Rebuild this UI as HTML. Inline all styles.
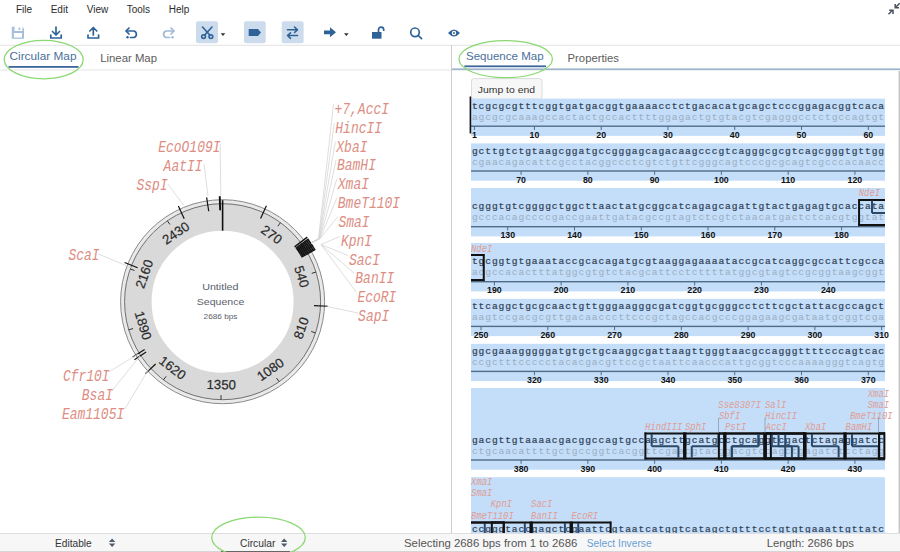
<!DOCTYPE html><html><head><meta charset="utf-8"><style>
html,body{margin:0;padding:0;width:900px;height:552px;overflow:hidden;background:#fff}
svg{display:block}
text{font-family:"Liberation Sans",sans-serif}
.mono{font-family:"Liberation Mono",monospace}
</style></head><body>
<svg width="900" height="552" viewBox="0 0 900 552">

<text x="16" y="12.7" font-size="10" fill="#2b2b2b">File</text>
<text x="50.7" y="12.7" font-size="10" fill="#2b2b2b">Edit</text>
<text x="86.7" y="12.7" font-size="10" fill="#2b2b2b">View</text>
<text x="126.7" y="12.7" font-size="10" fill="#2b2b2b">Tools</text>
<text x="168.7" y="12.7" font-size="10" fill="#2b2b2b">Help</text>
<g stroke="#465261" stroke-width="1.5" fill="none" stroke-linecap="butt"><path d="M888.5 14.3 L892.5 10.3"/><path d="M889.2 10.2 H893 V13.9"/><path d="M899.7 3.3 L895.7 7.3"/><path d="M895.2 4 V7.8 H899"/></g>
<rect x="196" y="21.3" width="22" height="22" rx="2" fill="#ccdcec"/>
<rect x="244" y="21.3" width="21.69999999999999" height="22" rx="2" fill="#ccdcec"/>
<rect x="281.7" y="21.3" width="21.900000000000034" height="22" rx="2" fill="#ccdcec"/>
<path fill-rule="evenodd" fill="#a6bfdb" d="M11.8 26.7 H22 L24 28.7 V38.7 H11.8 Z M14.5 26.7 V31 H22.3 V26.7 Z M13.9 32.9 V37.4 H22 V32.9 Z"/><rect x="18.6" y="27.5" width="1.6" height="2.6" fill="#a6bfdb"/>
<g fill="none" stroke="#2f6398" stroke-width="1.7" stroke-linecap="round" stroke-linejoin="round"><path d="M56 27 V34.5 M52.5 31.5 L56 35 L59.5 31.5"/><path d="M50.8 35 V38 H61.2 V35"/></g>
<g fill="none" stroke="#2f6398" stroke-width="1.7" stroke-linecap="round" stroke-linejoin="round"><path d="M93.3 35 V27.5 M89.8 31 L93.3 27.5 L96.8 31"/><path d="M88 35 V38 H98.6 V35"/></g>
<g fill="none" stroke="#2f6398" stroke-width="1.7" stroke-linecap="round" stroke-linejoin="round"><path d="M129 28 L126 31 L129 34"/><path d="M126.5 31 H134 A3.4 3.4 0 0 1 134 37.5 H130.5"/></g><circle cx="127.5" cy="37.3" r="1.2" fill="#2f6398"/>
<g fill="none" stroke="#9db9d6" stroke-width="1.7" stroke-linecap="round" stroke-linejoin="round"><path d="M171 28 L174 31 L171 34"/><path d="M173.5 31 H166 A3.4 3.4 0 0 0 166 37.5 H169.5"/></g><circle cx="172.5" cy="37.3" r="1.2" fill="#9db9d6"/>
<g fill="none" stroke="#2f6398" stroke-width="1.6" stroke-linecap="round"><path d="M202.5 27 L210 35.3 M212 27 L204.5 35.3"/><circle cx="203.6" cy="36.6" r="1.9"/><circle cx="210.9" cy="36.6" r="1.9"/></g>
<path d="M220.7 33.3 H225.3 L223 36 Z" fill="#333"/>
<path d="M248.7 29 H258 L261 32.5 L258 36 H248.7 Z" fill="#2f6398"/>
<g fill="none" stroke="#2f6398" stroke-width="1.6" stroke-linecap="round" stroke-linejoin="round"><path d="M287.5 29.8 H297.5 M294.5 27 L297.5 29.8 L294.5 32.5"/><path d="M297.5 35.5 H287.5 M290.5 32.8 L287.5 35.5 L290.5 38.3"/></g>
<path d="M324 30.5 H330 V27.3 L336 32.3 L330 37.3 V34.2 H324 Z" fill="#2f6398"/>
<path d="M344 33.3 H348.7 L346.3 36 Z" fill="#333"/>
<rect x="372" y="32" width="9.5" height="6.7" fill="#2f6398"/><path d="M378.5 32.5 V29.8 A2.6 2.6 0 0 1 383.7 29.8 V31" fill="none" stroke="#2f6398" stroke-width="1.7"/>
<g fill="none" stroke="#2f6398" stroke-width="1.7" stroke-linecap="round"><circle cx="415" cy="32.3" r="4.3"/><path d="M418.3 35.6 L421.6 38.6"/></g>
<path d="M448 33 Q454 26 460 33 Q454 40 448 33 Z" fill="#2f6398"/><circle cx="454" cy="33" r="2.2" fill="#fff"/><circle cx="454" cy="33" r="1" fill="#2f6398"/>
<rect x="0" y="44.8" width="900" height="1" fill="#e3e3e3"/>
<text x="9.5" y="60.4" font-size="11.5" fill="#4a6f9c" textLength="67" lengthAdjust="spacingAndGlyphs">Circular Map</text>
<rect x="8.5" y="66" width="70" height="1.8" fill="#3d679c"/>
<text x="100.2" y="61.5" font-size="11.5" fill="#5c5c5c" textLength="56.8" lengthAdjust="spacingAndGlyphs">Linear Map</text>
<rect x="0" y="69.5" width="451" height="1" fill="#e6e6e6"/>
<rect x="451" y="45" width="1" height="488" fill="#cdcdcd"/>
<text x="466" y="60.1" font-size="11.5" fill="#4a6f9c" textLength="77.6" lengthAdjust="spacingAndGlyphs">Sequence Map</text>
<rect x="464.4" y="65.4" width="81.6" height="1.8" fill="#3d679c"/>
<text x="567.6" y="61.6" font-size="11.5" fill="#5c5c5c" textLength="51.4" lengthAdjust="spacingAndGlyphs">Properties</text>
<rect x="452" y="68.4" width="448" height="1.8" fill="#9db5cc"/>
<rect x="898.6" y="71" width="1.4" height="462" fill="#c4c4c4"/>
<rect x="471.5" y="78.6" width="70.5" height="20.6" rx="2.5" fill="#f7f7f7" stroke="#dcdcdc" stroke-width="1"/>
<text x="477.8" y="92.6" font-size="9.5" fill="#333" textLength="57.2" lengthAdjust="spacingAndGlyphs">Jump to end</text>
<rect x="471.0" y="98.6" width="413.97" height="37.3" fill="#c4defa"/>
<text class="mono" x="471.9" y="108.8" font-size="9.6" font-weight="normal" fill="#314357" stroke="#314357" stroke-width="0.22" textLength="412.2" lengthAdjust="spacing" transform="translate(0 108.8) scale(1 1.02) translate(0 -108.8)">tcgcgcgtttcggtgatgacggtgaaaacctctgacacatgcagctcccggagacggtcaca</text>
<text class="mono" x="471.9" y="119.9" font-size="9.6" fill="#9aadc1" textLength="412.2" lengthAdjust="spacing" transform="translate(0 119.9) scale(1 1.02) translate(0 -119.9)">agcgcgcaaagccactactgccacttttggagactgtgtacgtcgagggcctctgccagtgt</text>
<rect x="471.0" y="125.5" width="413.97" height="1.4" fill="#4f6c88"/>
<rect x="473.84" y="126.2" width="1" height="3.8" fill="#4f6c88"/>
<text x="474.34" y="137.8" font-size="8.8" font-weight="bold" fill="#111" text-anchor="middle">1</text>
<rect x="533.93" y="126.2" width="1" height="3.8" fill="#4f6c88"/>
<text x="534.43" y="137.8" font-size="8.8" font-weight="bold" fill="#111" text-anchor="middle">10</text>
<rect x="600.70" y="126.2" width="1" height="3.8" fill="#4f6c88"/>
<text x="601.20" y="137.8" font-size="8.8" font-weight="bold" fill="#111" text-anchor="middle">20</text>
<rect x="667.47" y="126.2" width="1" height="3.8" fill="#4f6c88"/>
<text x="667.97" y="137.8" font-size="8.8" font-weight="bold" fill="#111" text-anchor="middle">30</text>
<rect x="734.24" y="126.2" width="1" height="3.8" fill="#4f6c88"/>
<text x="734.74" y="137.8" font-size="8.8" font-weight="bold" fill="#111" text-anchor="middle">40</text>
<rect x="801.01" y="126.2" width="1" height="3.8" fill="#4f6c88"/>
<text x="801.51" y="137.8" font-size="8.8" font-weight="bold" fill="#111" text-anchor="middle">50</text>
<rect x="867.78" y="126.2" width="1" height="3.8" fill="#4f6c88"/>
<text x="868.28" y="137.8" font-size="8.8" font-weight="bold" fill="#111" text-anchor="middle">60</text>
<rect x="471.0" y="143.4" width="413.97" height="37.3" fill="#c4defa"/>
<text class="mono" x="471.9" y="153.6" font-size="9.6" font-weight="normal" fill="#314357" stroke="#314357" stroke-width="0.22" textLength="412.2" lengthAdjust="spacing" transform="translate(0 153.6) scale(1 1.02) translate(0 -153.6)">gcttgtctgtaagcggatgccgggagcagacaagcccgtcagggcgcgtcagcgggtgttgg</text>
<text class="mono" x="471.9" y="164.7" font-size="9.6" fill="#9aadc1" textLength="412.2" lengthAdjust="spacing" transform="translate(0 164.7) scale(1 1.02) translate(0 -164.7)">cgaacagacattcgcctacggccctcgtctgttcgggcagtcccgcgcagtcgcccacaacc</text>
<rect x="471.0" y="170.3" width="413.97" height="1.4" fill="#4f6c88"/>
<rect x="520.58" y="171.0" width="1" height="3.8" fill="#4f6c88"/>
<text x="521.08" y="182.6" font-size="8.8" font-weight="bold" fill="#111" text-anchor="middle">70</text>
<rect x="587.35" y="171.0" width="1" height="3.8" fill="#4f6c88"/>
<text x="587.85" y="182.6" font-size="8.8" font-weight="bold" fill="#111" text-anchor="middle">80</text>
<rect x="654.12" y="171.0" width="1" height="3.8" fill="#4f6c88"/>
<text x="654.62" y="182.6" font-size="8.8" font-weight="bold" fill="#111" text-anchor="middle">90</text>
<rect x="720.89" y="171.0" width="1" height="3.8" fill="#4f6c88"/>
<text x="721.39" y="182.6" font-size="8.8" font-weight="bold" fill="#111" text-anchor="middle">100</text>
<rect x="787.66" y="171.0" width="1" height="3.8" fill="#4f6c88"/>
<text x="788.16" y="182.6" font-size="8.8" font-weight="bold" fill="#111" text-anchor="middle">110</text>
<rect x="854.43" y="171.0" width="1" height="3.8" fill="#4f6c88"/>
<text x="854.93" y="182.6" font-size="8.8" font-weight="bold" fill="#111" text-anchor="middle">120</text>
<rect x="471.0" y="188" width="413.97" height="48.4" fill="#c4defa"/>
<text class="mono" x="471.9" y="209.3" font-size="9.6" font-weight="normal" fill="#314357" stroke="#314357" stroke-width="0.22" textLength="412.2" lengthAdjust="spacing" transform="translate(0 209.3) scale(1 1.02) translate(0 -209.3)">cgggtgtcggggctggcttaactatgcggcatcagagcagattgtactgagagtgcaccata</text>
<text class="mono" x="471.9" y="220.4" font-size="9.6" fill="#9aadc1" textLength="412.2" lengthAdjust="spacing" transform="translate(0 220.4) scale(1 1.02) translate(0 -220.4)">gcccacagccccgaccgaattgatacgccgtagtctcgtctaacatgactctcacgtggtat</text>
<rect x="471.0" y="226.0" width="413.97" height="1.4" fill="#4f6c88"/>
<rect x="507.22" y="226.7" width="1" height="3.8" fill="#4f6c88"/>
<text x="507.72" y="238.3" font-size="8.8" font-weight="bold" fill="#111" text-anchor="middle">130</text>
<rect x="573.99" y="226.7" width="1" height="3.8" fill="#4f6c88"/>
<text x="574.49" y="238.3" font-size="8.8" font-weight="bold" fill="#111" text-anchor="middle">140</text>
<rect x="640.76" y="226.7" width="1" height="3.8" fill="#4f6c88"/>
<text x="641.26" y="238.3" font-size="8.8" font-weight="bold" fill="#111" text-anchor="middle">150</text>
<rect x="707.53" y="226.7" width="1" height="3.8" fill="#4f6c88"/>
<text x="708.03" y="238.3" font-size="8.8" font-weight="bold" fill="#111" text-anchor="middle">160</text>
<rect x="774.30" y="226.7" width="1" height="3.8" fill="#4f6c88"/>
<text x="774.80" y="238.3" font-size="8.8" font-weight="bold" fill="#111" text-anchor="middle">170</text>
<rect x="841.07" y="226.7" width="1" height="3.8" fill="#4f6c88"/>
<text x="841.57" y="238.3" font-size="8.8" font-weight="bold" fill="#111" text-anchor="middle">180</text>
<rect x="471.0" y="243" width="413.97" height="48.4" fill="#c4defa"/>
<text class="mono" x="471.9" y="264.3" font-size="9.6" font-weight="normal" fill="#314357" stroke="#314357" stroke-width="0.22" textLength="412.2" lengthAdjust="spacing" transform="translate(0 264.3) scale(1 1.02) translate(0 -264.3)">tgcggtgtgaaataccgcacagatgcgtaaggagaaaataccgcatcaggcgccattcgcca</text>
<text class="mono" x="471.9" y="275.4" font-size="9.6" fill="#9aadc1" textLength="412.2" lengthAdjust="spacing" transform="translate(0 275.4) scale(1 1.02) translate(0 -275.4)">acgccacactttatggcgtgtctacgcattcctcttttatggcgtagtccgcggtaagcggt</text>
<rect x="471.0" y="281.0" width="413.97" height="1.4" fill="#4f6c88"/>
<rect x="493.87" y="281.7" width="1" height="3.8" fill="#4f6c88"/>
<text x="494.37" y="293.3" font-size="8.8" font-weight="bold" fill="#111" text-anchor="middle">190</text>
<rect x="560.64" y="281.7" width="1" height="3.8" fill="#4f6c88"/>
<text x="561.14" y="293.3" font-size="8.8" font-weight="bold" fill="#111" text-anchor="middle">200</text>
<rect x="627.41" y="281.7" width="1" height="3.8" fill="#4f6c88"/>
<text x="627.91" y="293.3" font-size="8.8" font-weight="bold" fill="#111" text-anchor="middle">210</text>
<rect x="694.18" y="281.7" width="1" height="3.8" fill="#4f6c88"/>
<text x="694.68" y="293.3" font-size="8.8" font-weight="bold" fill="#111" text-anchor="middle">220</text>
<rect x="760.95" y="281.7" width="1" height="3.8" fill="#4f6c88"/>
<text x="761.45" y="293.3" font-size="8.8" font-weight="bold" fill="#111" text-anchor="middle">230</text>
<rect x="827.72" y="281.7" width="1" height="3.8" fill="#4f6c88"/>
<text x="828.22" y="293.3" font-size="8.8" font-weight="bold" fill="#111" text-anchor="middle">240</text>
<rect x="471.0" y="298.8" width="413.97" height="37.3" fill="#c4defa"/>
<text class="mono" x="471.9" y="309.0" font-size="9.6" font-weight="normal" fill="#314357" stroke="#314357" stroke-width="0.22" textLength="412.2" lengthAdjust="spacing" transform="translate(0 309.0) scale(1 1.02) translate(0 -309.0)">ttcaggctgcgcaactgttgggaagggcgatcggtgcgggcctcttcgctattacgccagct</text>
<text class="mono" x="471.9" y="320.1" font-size="9.6" fill="#9aadc1" textLength="412.2" lengthAdjust="spacing" transform="translate(0 320.1) scale(1 1.02) translate(0 -320.1)">aagtccgacgcgttgacaacccttcccgctagccacgcccggagaagcgataatgcggtcga</text>
<rect x="471.0" y="325.7" width="413.97" height="1.4" fill="#4f6c88"/>
<rect x="480.52" y="326.4" width="1" height="3.8" fill="#4f6c88"/>
<text x="481.02" y="338.0" font-size="8.8" font-weight="bold" fill="#111" text-anchor="middle">250</text>
<rect x="547.29" y="326.4" width="1" height="3.8" fill="#4f6c88"/>
<text x="547.79" y="338.0" font-size="8.8" font-weight="bold" fill="#111" text-anchor="middle">260</text>
<rect x="614.06" y="326.4" width="1" height="3.8" fill="#4f6c88"/>
<text x="614.56" y="338.0" font-size="8.8" font-weight="bold" fill="#111" text-anchor="middle">270</text>
<rect x="680.83" y="326.4" width="1" height="3.8" fill="#4f6c88"/>
<text x="681.33" y="338.0" font-size="8.8" font-weight="bold" fill="#111" text-anchor="middle">280</text>
<rect x="747.60" y="326.4" width="1" height="3.8" fill="#4f6c88"/>
<text x="748.10" y="338.0" font-size="8.8" font-weight="bold" fill="#111" text-anchor="middle">290</text>
<rect x="814.37" y="326.4" width="1" height="3.8" fill="#4f6c88"/>
<text x="814.87" y="338.0" font-size="8.8" font-weight="bold" fill="#111" text-anchor="middle">300</text>
<rect x="881.14" y="326.4" width="1" height="3.8" fill="#4f6c88"/>
<text x="881.64" y="338.0" font-size="8.8" font-weight="bold" fill="#111" text-anchor="middle">310</text>
<rect x="471.0" y="343.8" width="413.97" height="37.3" fill="#c4defa"/>
<text class="mono" x="471.9" y="354.0" font-size="9.6" font-weight="normal" fill="#314357" stroke="#314357" stroke-width="0.22" textLength="412.2" lengthAdjust="spacing" transform="translate(0 354.0) scale(1 1.02) translate(0 -354.0)">ggcgaaagggggatgtgctgcaaggcgattaagttgggtaacgccagggttttcccagtcac</text>
<text class="mono" x="471.9" y="365.1" font-size="9.6" fill="#9aadc1" textLength="412.2" lengthAdjust="spacing" transform="translate(0 365.1) scale(1 1.02) translate(0 -365.1)">ccgctttccccctacacgacgttccgctaattcaacccattgcggtcccaaaagggtcagtg</text>
<rect x="471.0" y="370.7" width="413.97" height="1.4" fill="#4f6c88"/>
<rect x="533.93" y="371.4" width="1" height="3.8" fill="#4f6c88"/>
<text x="534.43" y="383.0" font-size="8.8" font-weight="bold" fill="#111" text-anchor="middle">320</text>
<rect x="600.70" y="371.4" width="1" height="3.8" fill="#4f6c88"/>
<text x="601.20" y="383.0" font-size="8.8" font-weight="bold" fill="#111" text-anchor="middle">330</text>
<rect x="667.47" y="371.4" width="1" height="3.8" fill="#4f6c88"/>
<text x="667.97" y="383.0" font-size="8.8" font-weight="bold" fill="#111" text-anchor="middle">340</text>
<rect x="734.24" y="371.4" width="1" height="3.8" fill="#4f6c88"/>
<text x="734.74" y="383.0" font-size="8.8" font-weight="bold" fill="#111" text-anchor="middle">350</text>
<rect x="801.01" y="371.4" width="1" height="3.8" fill="#4f6c88"/>
<text x="801.51" y="383.0" font-size="8.8" font-weight="bold" fill="#111" text-anchor="middle">360</text>
<rect x="867.78" y="371.4" width="1" height="3.8" fill="#4f6c88"/>
<text x="868.28" y="383.0" font-size="8.8" font-weight="bold" fill="#111" text-anchor="middle">370</text>
<rect x="471.0" y="388" width="413.97" height="81.7" fill="#c4defa"/>
<text class="mono" x="471.9" y="442.6" font-size="9.6" font-weight="normal" fill="#314357" stroke="#314357" stroke-width="0.22" textLength="412.2" lengthAdjust="spacing" transform="translate(0 442.6) scale(1 1.02) translate(0 -442.6)">gacgttgtaaaacgacggccagtgccaagcttgcatgcctgcaggtcgactctagaggatcc</text>
<text class="mono" x="471.9" y="453.7" font-size="9.6" fill="#9aadc1" textLength="412.2" lengthAdjust="spacing" transform="translate(0 453.7) scale(1 1.02) translate(0 -453.7)">ctgcaacattttgctgccggtcacggttcgaacgtacggacgtccagctgagatctcctagg</text>
<rect x="471.0" y="459.3" width="413.97" height="1.4" fill="#4f6c88"/>
<rect x="520.58" y="460.0" width="1" height="3.8" fill="#4f6c88"/>
<text x="521.08" y="471.6" font-size="8.8" font-weight="bold" fill="#111" text-anchor="middle">380</text>
<rect x="587.35" y="460.0" width="1" height="3.8" fill="#4f6c88"/>
<text x="587.85" y="471.6" font-size="8.8" font-weight="bold" fill="#111" text-anchor="middle">390</text>
<rect x="654.12" y="460.0" width="1" height="3.8" fill="#4f6c88"/>
<text x="654.62" y="471.6" font-size="8.8" font-weight="bold" fill="#111" text-anchor="middle">400</text>
<rect x="720.89" y="460.0" width="1" height="3.8" fill="#4f6c88"/>
<text x="721.39" y="471.6" font-size="8.8" font-weight="bold" fill="#111" text-anchor="middle">410</text>
<rect x="787.66" y="460.0" width="1" height="3.8" fill="#4f6c88"/>
<text x="788.16" y="471.6" font-size="8.8" font-weight="bold" fill="#111" text-anchor="middle">420</text>
<rect x="854.43" y="460.0" width="1" height="3.8" fill="#4f6c88"/>
<text x="854.93" y="471.6" font-size="8.8" font-weight="bold" fill="#111" text-anchor="middle">430</text>
<rect x="471.0" y="477.2" width="413.97" height="81.7" fill="#c4defa"/>
<text class="mono" x="471.9" y="531.8" font-size="9.6" font-weight="normal" fill="#314357" stroke="#314357" stroke-width="0.22" textLength="412.2" lengthAdjust="spacing" transform="translate(0 531.8) scale(1 1.02) translate(0 -531.8)">ccgggtaccgagctcgaattcgtaatcatggtcatagctgtttcctgtgtgaaattgttatc</text>
<text class="mono" x="471.9" y="542.9" font-size="9.6" fill="#9aadc1" textLength="412.2" lengthAdjust="spacing" transform="translate(0 542.9) scale(1 1.02) translate(0 -542.9)">ggcccatggctcgagcttaagcattagtaccagtatcgacaaaggacacactttaacaatag</text>
<rect x="471.0" y="548.5" width="413.97" height="1.4" fill="#4f6c88"/>
<rect x="507.22" y="549.2" width="1" height="3.8" fill="#4f6c88"/>
<text x="507.72" y="560.8" font-size="8.8" font-weight="bold" fill="#111" text-anchor="middle">440</text>
<rect x="573.99" y="549.2" width="1" height="3.8" fill="#4f6c88"/>
<text x="574.49" y="560.8" font-size="8.8" font-weight="bold" fill="#111" text-anchor="middle">450</text>
<rect x="640.76" y="549.2" width="1" height="3.8" fill="#4f6c88"/>
<text x="641.26" y="560.8" font-size="8.8" font-weight="bold" fill="#111" text-anchor="middle">460</text>
<rect x="707.53" y="549.2" width="1" height="3.8" fill="#4f6c88"/>
<text x="708.03" y="560.8" font-size="8.8" font-weight="bold" fill="#111" text-anchor="middle">470</text>
<rect x="774.30" y="549.2" width="1" height="3.8" fill="#4f6c88"/>
<text x="774.80" y="560.8" font-size="8.8" font-weight="bold" fill="#111" text-anchor="middle">480</text>
<rect x="841.07" y="549.2" width="1" height="3.8" fill="#4f6c88"/>
<text x="841.57" y="560.8" font-size="8.8" font-weight="bold" fill="#111" text-anchor="middle">490</text>
<path d="M858.27 200.1 H884.97 M858.27 225.1 H884.97" stroke="#111" stroke-width="2" fill="none"/>
<rect x="858.07" y="199.1" width="2" height="27" fill="#111"/>
<path d="M872.02 200.6 V212.9 M872.02 212.9 H884.97 " stroke="#2b4867" stroke-width="2" fill="none"/>
<path d="M471.00 255.1 H484.35 M471.00 280.1 H484.35" stroke="#111" stroke-width="2" fill="none"/>
<rect x="482.75" y="254.1" width="2" height="27" fill="#111"/>
<text class="mono" x="858.8" y="196.1" font-size="8.9" font-style="italic" fill="#e09d94" transform="translate(0 195.6) scale(1 1.18) translate(0 -195.6)">NdeI</text>
<text class="mono" x="471" y="251.5" font-size="8.9" font-style="italic" fill="#e09d94" transform="translate(0 251) scale(1 1.18) translate(0 -251)">NdeI</text>
<path d="M644.60 433.4 H684.66 M644.60 458.4 H684.66" stroke="#111" stroke-width="2" fill="none"/>
<rect x="644.40" y="432.4" width="2" height="27" fill="#111"/>
<rect x="683.06" y="432.4" width="2" height="27" fill="#111"/>
<path d="M651.68 433.9 V446.2 M651.68 446.2 H678.39 M678.39 446.2 V457.4 " stroke="#2b4867" stroke-width="2" fill="none"/>
<path d="M684.66 433.4 H724.73 M684.66 458.4 H724.73" stroke="#111" stroke-width="2" fill="none"/>
<rect x="684.46" y="432.4" width="2" height="27" fill="#111"/>
<rect x="723.13" y="432.4" width="2" height="27" fill="#111"/>
<path d="M718.45 433.9 V446.2 M691.74 446.2 H718.45 M691.74 446.2 V457.4 " stroke="#2b4867" stroke-width="2" fill="none"/>
<path d="M718.05 433.4 H771.46 M718.05 458.4 H771.46" stroke="#111" stroke-width="2" fill="none"/>
<rect x="717.85" y="432.4" width="2" height="27" fill="#111"/>
<rect x="769.86" y="432.4" width="2" height="27" fill="#111"/>
<path d="M758.51 433.9 V446.2 M731.80 446.2 H758.51 M731.80 446.2 V457.4 " stroke="#2b4867" stroke-width="2" fill="none"/>
<path d="M724.73 433.4 H764.79 M724.73 458.4 H764.79" stroke="#111" stroke-width="2" fill="none"/>
<rect x="724.53" y="432.4" width="2" height="27" fill="#111"/>
<rect x="763.19" y="432.4" width="2" height="27" fill="#111"/>
<path d="M758.51 433.9 V446.2 M731.80 446.2 H758.51 M731.80 446.2 V457.4 " stroke="#2b4867" stroke-width="2" fill="none"/>
<path d="M764.79 433.4 H804.85 M764.79 458.4 H804.85" stroke="#111" stroke-width="2" fill="none"/>
<rect x="764.59" y="432.4" width="2" height="27" fill="#111"/>
<rect x="803.25" y="432.4" width="2" height="27" fill="#111"/>
<path d="M771.87 433.9 V446.2 M771.87 446.2 H798.57 M798.57 446.2 V457.4 " stroke="#2b4867" stroke-width="2" fill="none"/>
<path d="M764.79 433.4 H804.85 M764.79 458.4 H804.85" stroke="#111" stroke-width="2" fill="none"/>
<rect x="764.59" y="432.4" width="2" height="27" fill="#111"/>
<rect x="803.25" y="432.4" width="2" height="27" fill="#111"/>
<path d="M785.22 433.9 V446.2 M785.22 446.2 V457.4 " stroke="#2b4867" stroke-width="2" fill="none"/>
<path d="M764.79 433.4 H804.85 M764.79 458.4 H804.85" stroke="#111" stroke-width="2" fill="none"/>
<rect x="764.59" y="432.4" width="2" height="27" fill="#111"/>
<rect x="803.25" y="432.4" width="2" height="27" fill="#111"/>
<path d="M778.54 433.9 V446.2 M778.54 446.2 H791.90 M791.90 446.2 V457.4 " stroke="#2b4867" stroke-width="2" fill="none"/>
<path d="M804.85 433.4 H844.91 M804.85 458.4 H844.91" stroke="#111" stroke-width="2" fill="none"/>
<rect x="804.65" y="432.4" width="2" height="27" fill="#111"/>
<rect x="843.31" y="432.4" width="2" height="27" fill="#111"/>
<path d="M811.93 433.9 V446.2 M811.93 446.2 H838.63 M838.63 446.2 V457.4 " stroke="#2b4867" stroke-width="2" fill="none"/>
<path d="M844.91 433.4 H884.97 M844.91 458.4 H884.97" stroke="#111" stroke-width="2" fill="none"/>
<rect x="844.71" y="432.4" width="2" height="27" fill="#111"/>
<rect x="883.37" y="432.4" width="2" height="27" fill="#111"/>
<path d="M851.99 433.9 V446.2 M851.99 446.2 H878.70 M878.70 446.2 V457.4 " stroke="#2b4867" stroke-width="2" fill="none"/>
<path d="M878.30 433.4 H884.97 M878.30 458.4 H884.97" stroke="#111" stroke-width="2" fill="none"/>
<rect x="878.10" y="432.4" width="2" height="27" fill="#111"/>
<path d="M471.00 522.6 H504.38 M471.00 547.6 H504.38" stroke="#111" stroke-width="2" fill="none"/>
<rect x="502.78" y="521.6" width="2" height="27" fill="#111"/>
<path d="M484.75 523.1 V535.4 M484.75 535.4 V546.6 " stroke="#2b4867" stroke-width="2" fill="none"/>
<path d="M878.30 433.4 H884.97 M878.30 458.4 H884.97" stroke="#111" stroke-width="2" fill="none"/>
<rect x="878.10" y="432.4" width="2" height="27" fill="#111"/>
<path d="M471.00 522.6 H504.38 M471.00 547.6 H504.38" stroke="#111" stroke-width="2" fill="none"/>
<rect x="502.78" y="521.6" width="2" height="27" fill="#111"/>
<path d="M471.40 535.4 H498.11 M498.11 535.4 V546.6 " stroke="#2b4867" stroke-width="2" fill="none"/>
<path d="M491.03 522.6 H531.09 M491.03 547.6 H531.09" stroke="#111" stroke-width="2" fill="none"/>
<rect x="490.83" y="521.6" width="2" height="27" fill="#111"/>
<rect x="529.49" y="521.6" width="2" height="27" fill="#111"/>
<path d="M524.82 523.1 V535.4 M498.11 535.4 H524.82 M498.11 535.4 V546.6 " stroke="#2b4867" stroke-width="2" fill="none"/>
<path d="M531.09 522.6 H571.15 M531.09 547.6 H571.15" stroke="#111" stroke-width="2" fill="none"/>
<rect x="530.89" y="521.6" width="2" height="27" fill="#111"/>
<rect x="569.55" y="521.6" width="2" height="27" fill="#111"/>
<path d="M564.88 523.1 V535.4 M538.17 535.4 H564.88 M538.17 535.4 V546.6 " stroke="#2b4867" stroke-width="2" fill="none"/>
<path d="M571.15 522.6 H611.22 M571.15 547.6 H611.22" stroke="#111" stroke-width="2" fill="none"/>
<rect x="570.95" y="521.6" width="2" height="27" fill="#111"/>
<rect x="609.62" y="521.6" width="2" height="27" fill="#111"/>
<path d="M578.23 523.1 V535.4 M578.23 535.4 H604.94 M604.94 535.4 V546.6 " stroke="#2b4867" stroke-width="2" fill="none"/>
<text class="mono" x="718.3" y="408.1" font-size="8.9" font-style="italic" fill="#e09d94" transform="translate(0 407.6) scale(1 1.18) translate(0 -407.6)">Sse8387I</text>
<text class="mono" x="765" y="408.1" font-size="8.9" font-style="italic" fill="#e09d94" transform="translate(0 407.6) scale(1 1.18) translate(0 -407.6)">SalI</text>
<text class="mono" x="718.9" y="418.8" font-size="8.9" font-style="italic" fill="#e09d94" transform="translate(0 418.3) scale(1 1.18) translate(0 -418.3)">SbfI</text>
<text class="mono" x="765" y="418.8" font-size="8.9" font-style="italic" fill="#e09d94" transform="translate(0 418.3) scale(1 1.18) translate(0 -418.3)">HincII</text>
<text class="mono" x="645" y="429.9" font-size="8.9" font-style="italic" fill="#e09d94" transform="translate(0 429.4) scale(1 1.18) translate(0 -429.4)">HindIII</text>
<text class="mono" x="685" y="429.9" font-size="8.9" font-style="italic" fill="#e09d94" transform="translate(0 429.4) scale(1 1.18) translate(0 -429.4)">SphI</text>
<text class="mono" x="725" y="429.9" font-size="8.9" font-style="italic" fill="#e09d94" transform="translate(0 429.4) scale(1 1.18) translate(0 -429.4)">PstI</text>
<text class="mono" x="765.6" y="429.9" font-size="8.9" font-style="italic" fill="#e09d94" transform="translate(0 429.4) scale(1 1.18) translate(0 -429.4)">AccI</text>
<text class="mono" x="805" y="429.9" font-size="8.9" font-style="italic" fill="#e09d94" transform="translate(0 429.4) scale(1 1.18) translate(0 -429.4)">XbaI</text>
<text class="mono" x="845.6" y="429.9" font-size="8.9" font-style="italic" fill="#e09d94" transform="translate(0 429.4) scale(1 1.18) translate(0 -429.4)">BamHI</text>
<text class="mono" x="867.8" y="396.6" font-size="8.9" font-style="italic" fill="#e09d94" transform="translate(0 396.1) scale(1 1.18) translate(0 -396.1)">XmaI</text>
<text class="mono" x="867.8" y="407.7" font-size="8.9" font-style="italic" fill="#e09d94" transform="translate(0 407.2) scale(1 1.18) translate(0 -407.2)">SmaI</text>
<text class="mono" x="850" y="418.8" font-size="8.9" font-style="italic" fill="#e09d94" transform="translate(0 418.3) scale(1 1.18) translate(0 -418.3)">BmeT110I</text>
<text class="mono" x="471.1" y="485.2" font-size="8.9" font-style="italic" fill="#e09d94" transform="translate(0 484.7) scale(1 1.18) translate(0 -484.7)">XmaI</text>
<text class="mono" x="471.1" y="496.2" font-size="8.9" font-style="italic" fill="#e09d94" transform="translate(0 495.7) scale(1 1.18) translate(0 -495.7)">SmaI</text>
<text class="mono" x="490.8" y="507.2" font-size="8.9" font-style="italic" fill="#e09d94" transform="translate(0 506.7) scale(1 1.18) translate(0 -506.7)">KpnI</text>
<text class="mono" x="531.1" y="507.2" font-size="8.9" font-style="italic" fill="#e09d94" transform="translate(0 506.7) scale(1 1.18) translate(0 -506.7)">SacI</text>
<text class="mono" x="471.1" y="518.5" font-size="8.9" font-style="italic" fill="#e09d94" transform="translate(0 518) scale(1 1.18) translate(0 -518)">BmeT110I</text>
<text class="mono" x="531.1" y="518.5" font-size="8.9" font-style="italic" fill="#e09d94" transform="translate(0 518) scale(1 1.18) translate(0 -518)">BanII</text>
<text class="mono" x="571.5" y="518.5" font-size="8.9" font-style="italic" fill="#e09d94" transform="translate(0 518) scale(1 1.18) translate(0 -518)">EcoRI</text>
<rect x="718.0" y="418" width="0.8" height="14.800000000000011" fill="#8a9bb0"/>
<rect x="764.6" y="418" width="0.8" height="14.800000000000011" fill="#8a9bb0"/>
<rect x="878.0" y="417" width="0.8" height="15.800000000000011" fill="#8a9bb0"/>
<rect x="469.6" y="96.5" width="1.6" height="37" fill="#111"/>
<rect x="0" y="533" width="900" height="19" fill="#f7f7f7"/>
<rect x="0" y="533" width="900" height="1" fill="#dedede"/>
<rect x="0" y="551" width="900" height="1" fill="#d6d6d6"/>
<rect x="221" y="551" width="69" height="1" fill="#666"/>
<text x="55" y="546.9" font-size="10" fill="#333" textLength="36.7" lengthAdjust="spacingAndGlyphs">Editable</text>
<path d="M108.9 542 L112.10000000000001 538.5 L115.30000000000001 542 Z M108.9 543.5 L112.10000000000001 547 L115.30000000000001 543.5 Z" fill="#4d5c6c"/>
<text x="240" y="546.9" font-size="10" fill="#333" textLength="35.3" lengthAdjust="spacingAndGlyphs">Circular</text>
<path d="M281 542 L284.2 538.5 L287.4 542 Z M281 543.5 L284.2 547 L287.4 543.5 Z" fill="#4d5c6c"/>
<text x="404" y="547" font-size="10.5" fill="#555" textLength="173.3" lengthAdjust="spacingAndGlyphs">Selecting 2686 bps from 1 to 2686</text>
<text x="586.7" y="547" font-size="10.5" fill="#6a9fd2" textLength="65" lengthAdjust="spacingAndGlyphs">Select Inverse</text>
<text x="766.7" y="547" font-size="10.5" fill="#555" textLength="87.3" lengthAdjust="spacingAndGlyphs">Length: 2686 bps</text>
<circle cx="222.6" cy="301.7" r="84.6" fill="none" stroke="#d9d9d9" stroke-width="27.2"/>
<circle cx="222.6" cy="301.7" r="100" fill="none" stroke="#e9e9e9" stroke-width="4"/>
<circle cx="222.6" cy="301.7" r="102" fill="none" stroke="#8a8a8a" stroke-width="1"/>
<circle cx="222.6" cy="301.7" r="98" fill="none" stroke="#6f6f6f" stroke-width="1"/>
<line x1="280.46" y1="222.61" x2="277.81" y2="226.24" stroke="#333" stroke-width="1"/>
<text x="271.61" y="234.71" font-size="13.2" fill="#2a2a2a" stroke="#2a2a2a" stroke-width="0.2" text-anchor="middle" dominant-baseline="central" transform="rotate(36.19 271.61 234.71)">270</text>
<line x1="316.00" y1="272.03" x2="311.71" y2="273.39" stroke="#333" stroke-width="1"/>
<text x="301.70" y="276.57" font-size="13.2" fill="#2a2a2a" stroke="#2a2a2a" stroke-width="0.2" text-anchor="middle" dominant-baseline="central" transform="rotate(72.38 301.70 276.57)">540</text>
<line x1="315.50" y1="332.90" x2="311.24" y2="331.47" stroke="#333" stroke-width="1"/>
<text x="301.28" y="328.12" font-size="13.2" fill="#2a2a2a" stroke="#2a2a2a" stroke-width="0.2" text-anchor="middle" dominant-baseline="central" transform="rotate(-71.44 301.28 328.12)">810</text>
<line x1="279.16" y1="381.73" x2="276.56" y2="378.06" stroke="#333" stroke-width="1"/>
<text x="270.50" y="369.48" font-size="13.2" fill="#2a2a2a" stroke="#2a2a2a" stroke-width="0.2" text-anchor="middle" dominant-baseline="central" transform="rotate(-35.25 270.50 369.48)">1080</text>
<line x1="221.00" y1="399.69" x2="221.07" y2="395.19" stroke="#333" stroke-width="1"/>
<text x="221.24" y="384.69" font-size="13.2" fill="#2a2a2a" stroke="#2a2a2a" stroke-width="0.2" text-anchor="middle" dominant-baseline="central" transform="rotate(0.94 221.24 384.69)">1350</text>
<line x1="163.45" y1="379.84" x2="166.17" y2="376.25" stroke="#333" stroke-width="1"/>
<text x="172.50" y="367.88" font-size="13.2" fill="#2a2a2a" stroke="#2a2a2a" stroke-width="0.2" text-anchor="middle" dominant-baseline="central" transform="rotate(37.13 172.50 367.88)">1620</text>
<line x1="128.73" y1="329.84" x2="133.04" y2="328.55" stroke="#333" stroke-width="1"/>
<text x="143.10" y="325.53" font-size="13.2" fill="#2a2a2a" stroke="#2a2a2a" stroke-width="0.2" text-anchor="middle" dominant-baseline="central" transform="rotate(73.31 143.10 325.53)">1890</text>
<line x1="130.22" y1="268.99" x2="134.46" y2="270.49" stroke="#333" stroke-width="1"/>
<text x="144.36" y="273.99" font-size="13.2" fill="#2a2a2a" stroke="#2a2a2a" stroke-width="0.2" text-anchor="middle" dominant-baseline="central" transform="rotate(289.50 144.36 273.99)">2160</text>
<line x1="167.36" y1="220.75" x2="169.90" y2="224.47" stroke="#333" stroke-width="1"/>
<text x="175.81" y="233.14" font-size="13.2" fill="#2a2a2a" stroke="#2a2a2a" stroke-width="0.2" text-anchor="middle" dominant-baseline="central" transform="rotate(325.69 175.81 233.14)">2430</text>
<text x="202.2" y="289.5" font-size="9" fill="#5a626c" textLength="36.2" lengthAdjust="spacingAndGlyphs">Untitled</text>
<text x="196.8" y="304.9" font-size="9" fill="#5a626c" textLength="47.5" lengthAdjust="spacingAndGlyphs">Sequence</text>
<text x="203.6" y="319.4" font-size="7.5" fill="#5a626c" textLength="33.8" lengthAdjust="spacingAndGlyphs">2686 bps</text>
<line x1="222.60" y1="200.20" x2="222.60" y2="230.70" stroke="#111" stroke-width="1.6"/>
<line x1="220.13" y1="196.23" x2="220.46" y2="210.23" stroke="#111" stroke-width="1.2"/>
<line x1="219.39" y1="196.25" x2="219.82" y2="210.24" stroke="#111" stroke-width="1.2"/>
<line x1="206.62" y1="197.42" x2="208.74" y2="211.26" stroke="#111" stroke-width="1.2"/>
<line x1="178.36" y1="205.93" x2="184.23" y2="218.64" stroke="#111" stroke-width="1.2"/>
<line x1="124.63" y1="262.56" x2="137.63" y2="267.75" stroke="#111" stroke-width="1.2"/>
<line x1="134.43" y1="359.63" x2="146.13" y2="351.94" stroke="#111" stroke-width="1.2"/>
<line x1="132.71" y1="356.92" x2="144.64" y2="349.60" stroke="#111" stroke-width="1.2"/>
<line x1="145.39" y1="373.59" x2="155.63" y2="364.05" stroke="#111" stroke-width="1.2"/>
<line x1="266.40" y1="205.72" x2="260.58" y2="218.46" stroke="#111" stroke-width="1.2"/>
<line x1="328.00" y1="306.26" x2="314.01" y2="305.66" stroke="#111" stroke-width="1.2"/>
<line x1="307.29" y1="237.12" x2="294.56" y2="246.82" stroke="#111" stroke-width="1.4"/>
<line x1="308.63" y1="238.92" x2="295.70" y2="248.35" stroke="#111" stroke-width="1.4"/>
<line x1="309.36" y1="239.93" x2="296.32" y2="249.21" stroke="#111" stroke-width="1.4"/>
<line x1="310.07" y1="240.95" x2="296.93" y2="250.08" stroke="#111" stroke-width="1.4"/>
<line x1="310.78" y1="241.98" x2="297.53" y2="250.95" stroke="#111" stroke-width="1.4"/>
<line x1="311.47" y1="243.01" x2="298.12" y2="251.83" stroke="#111" stroke-width="1.4"/>
<line x1="312.15" y1="244.06" x2="298.70" y2="252.72" stroke="#111" stroke-width="1.4"/>
<line x1="312.82" y1="245.11" x2="299.26" y2="253.61" stroke="#111" stroke-width="1.4"/>
<line x1="313.47" y1="246.17" x2="299.82" y2="254.51" stroke="#111" stroke-width="1.4"/>
<line x1="314.12" y1="247.23" x2="300.37" y2="255.42" stroke="#111" stroke-width="1.4"/>
<line x1="314.75" y1="248.31" x2="300.90" y2="256.33" stroke="#111" stroke-width="1.4"/>
<line x1="315.37" y1="249.39" x2="301.43" y2="257.25" stroke="#111" stroke-width="1.4"/>
<path d="M333.5 104.1 L318.5 238.5 L311.0 243.0" fill="none" stroke="#d5d5d5" stroke-width="0.8"/>
<path d="M334.3 123.1 L318.8 238.5 L311.0 243.0" fill="none" stroke="#d5d5d5" stroke-width="0.8"/>
<path d="M335.3 141.6 L319.1 238.5 L311.0 243.0" fill="none" stroke="#d5d5d5" stroke-width="0.8"/>
<path d="M336.0 159.9 L319.4 238.5 L311.0 243.0" fill="none" stroke="#d5d5d5" stroke-width="0.8"/>
<path d="M336.8 178.9 L319.7 238.5 L311.0 243.0" fill="none" stroke="#d5d5d5" stroke-width="0.8"/>
<path d="M336.8 198.0 L320.0 238.5 L311.0 243.0" fill="none" stroke="#d5d5d5" stroke-width="0.8"/>
<path d="M337.5 216.8 L320.3 238.5 L311.0 243.0" fill="none" stroke="#d5d5d5" stroke-width="0.8"/>
<path d="M339.9 236.5 L321.0 244.5" fill="none" stroke="#d5d5d5" stroke-width="0.8"/>
<path d="M348.0 255.5 L321.0 244.5" fill="none" stroke="#d5d5d5" stroke-width="0.8"/>
<path d="M354.3 273.3 L321.0 244.5" fill="none" stroke="#d5d5d5" stroke-width="0.8"/>
<path d="M356.4 292.3 L321.0 244.5" fill="none" stroke="#d5d5d5" stroke-width="0.8"/>
<path d="M358.0 313.0 L327.0 306.5" fill="none" stroke="#d5d5d5" stroke-width="0.8"/>
<path d="M220.2 144.0 L220.8 196.0" fill="none" stroke="#d5d5d5" stroke-width="0.8"/>
<path d="M204.0 164.0 L208.0 196.0" fill="none" stroke="#d5d5d5" stroke-width="0.8"/>
<path d="M167.7 184.0 L183.5 205.0" fill="none" stroke="#d5d5d5" stroke-width="0.8"/>
<path d="M98.4 254.0 L133.0 268.5" fill="none" stroke="#d5d5d5" stroke-width="0.8"/>
<path d="M108.7 372.0 L138.0 354.0" fill="none" stroke="#d5d5d5" stroke-width="0.8"/>
<path d="M111.7 391.0 L140.0 356.0" fill="none" stroke="#d5d5d5" stroke-width="0.8"/>
<path d="M124.7 409.0 L150.0 367.0" fill="none" stroke="#d5d5d5" stroke-width="0.8"/>
<text class="mono" x="340.9" y="246.2" font-size="13" font-style="italic" fill="#dd8d82" transform="translate(0 246.2) scale(1 1.2) translate(0 -246.2)">KpnI</text>
<text class="mono" x="349" y="265.2" font-size="13" font-style="italic" fill="#dd8d82" transform="translate(0 265.2) scale(1 1.2) translate(0 -265.2)">SacI</text>
<text class="mono" x="355.3" y="283.0" font-size="13" font-style="italic" fill="#dd8d82" transform="translate(0 283.0) scale(1 1.2) translate(0 -283.0)">BanII</text>
<text class="mono" x="357.4" y="302.0" font-size="13" font-style="italic" fill="#dd8d82" transform="translate(0 302.0) scale(1 1.2) translate(0 -302.0)">EcoRI</text>
<text class="mono" x="358.1" y="321.0" font-size="13" font-style="italic" fill="#dd8d82" transform="translate(0 321.0) scale(1 1.2) translate(0 -321.0)">SapI</text>
<text class="mono" x="334.5" y="114.1" font-size="13" font-style="italic" fill="#dd8d82" transform="translate(0 114.1) scale(1 1.2) translate(0 -114.1)">+7,AccI</text>
<text class="mono" x="335.3" y="133.1" font-size="13" font-style="italic" fill="#dd8d82" transform="translate(0 133.1) scale(1 1.2) translate(0 -133.1)">HincII</text>
<text class="mono" x="336.3" y="151.6" font-size="13" font-style="italic" fill="#dd8d82" transform="translate(0 151.6) scale(1 1.2) translate(0 -151.6)">XbaI</text>
<text class="mono" x="337" y="169.9" font-size="13" font-style="italic" fill="#dd8d82" transform="translate(0 169.9) scale(1 1.2) translate(0 -169.9)">BamHI</text>
<text class="mono" x="337.8" y="188.9" font-size="13" font-style="italic" fill="#dd8d82" transform="translate(0 188.9) scale(1 1.2) translate(0 -188.9)">XmaI</text>
<text class="mono" x="337.8" y="208" font-size="13" font-style="italic" fill="#dd8d82" transform="translate(0 208) scale(1 1.2) translate(0 -208)">BmeT110I</text>
<text class="mono" x="338.5" y="226.8" font-size="13" font-style="italic" fill="#dd8d82" transform="translate(0 226.8) scale(1 1.2) translate(0 -226.8)">SmaI</text>
<text class="mono" x="158.2" y="151.7" font-size="13" font-style="italic" fill="#dd8d82" transform="translate(0 151.7) scale(1 1.2) translate(0 -151.7)">EcoO109I</text>
<text class="mono" x="163.6" y="170.8" font-size="13" font-style="italic" fill="#dd8d82" transform="translate(0 170.8) scale(1 1.2) translate(0 -170.8)">AatII</text>
<text class="mono" x="136.5" y="189.8" font-size="13" font-style="italic" fill="#dd8d82" transform="translate(0 189.8) scale(1 1.2) translate(0 -189.8)">SspI</text>
<text class="mono" x="68.5" y="260.4" font-size="13" font-style="italic" fill="#dd8d82" transform="translate(0 260.4) scale(1 1.2) translate(0 -260.4)">ScaI</text>
<text class="mono" x="62.9" y="381.4" font-size="13" font-style="italic" fill="#dd8d82" transform="translate(0 381.4) scale(1 1.2) translate(0 -381.4)">Cfr10I</text>
<text class="mono" x="81.8" y="400.1" font-size="13" font-style="italic" fill="#dd8d82" transform="translate(0 400.1) scale(1 1.2) translate(0 -400.1)">BsaI</text>
<text class="mono" x="61.9" y="418.6" font-size="13" font-style="italic" fill="#dd8d82" transform="translate(0 418.6) scale(1 1.2) translate(0 -418.6)">Eam1105I</text>
<ellipse cx="43.7" cy="59.6" rx="39.5" ry="19.2" fill="none" stroke="#8ad872" stroke-width="1.25"/>
<ellipse cx="505.7" cy="59.1" rx="46.7" ry="18.6" fill="none" stroke="#8ad872" stroke-width="1.25"/>
<ellipse cx="258.5" cy="537.6" rx="46.8" ry="20.5" fill="none" stroke="#8ad872" stroke-width="1.25"/>
</svg></body></html>
